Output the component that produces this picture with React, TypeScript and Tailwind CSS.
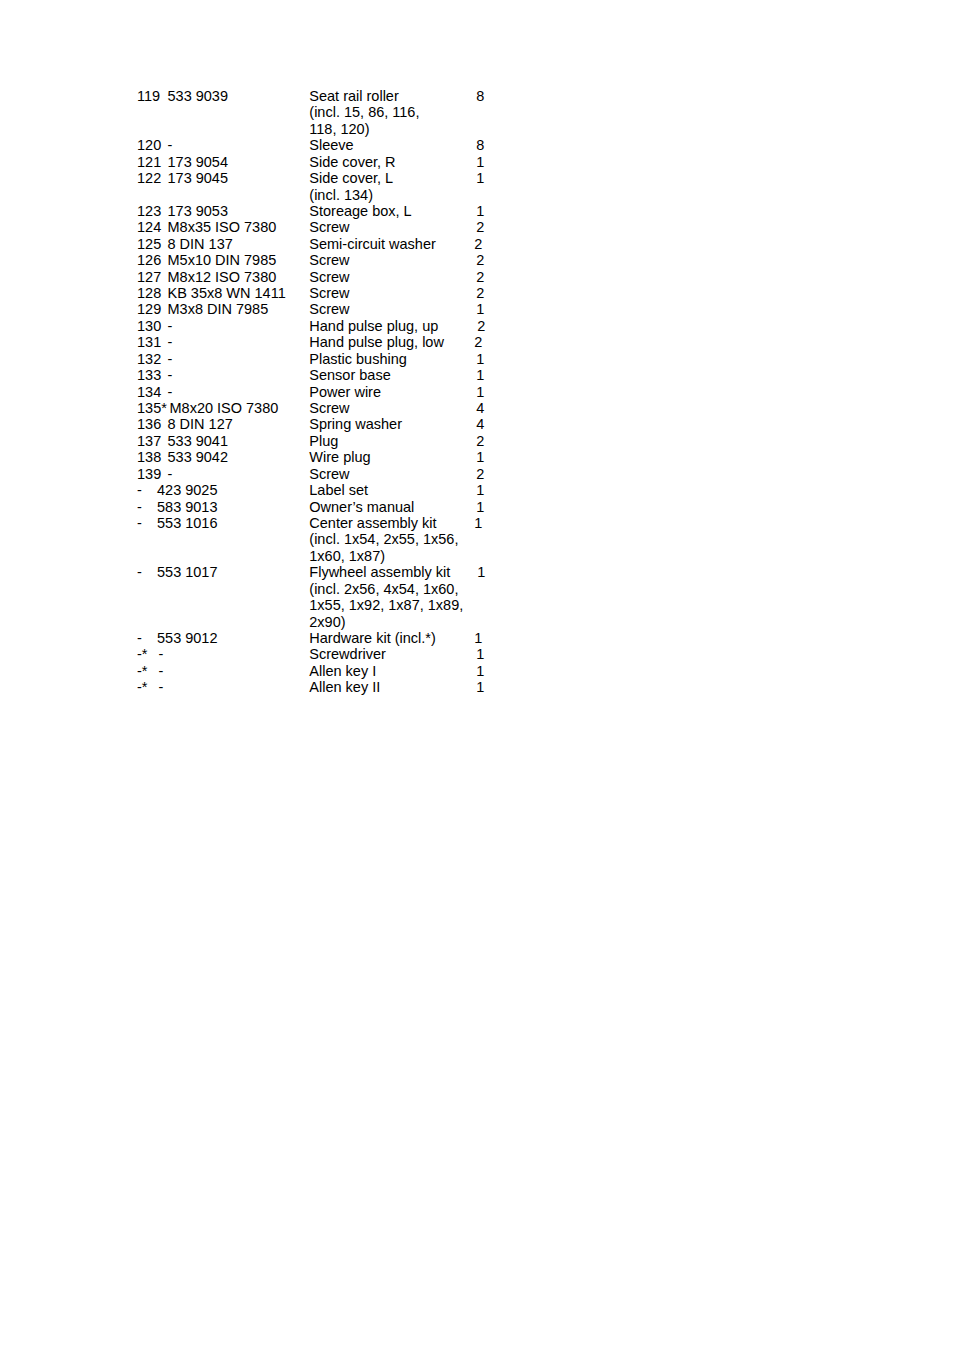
type Row = {
  n: string
  p: string
  d: string[]
  q: string
  nw?: string
  qp?: string
}

// parts list rows; nw = width of the item-number slot, qp = nudge of the quantity
const rows: Row[] = [
  { n: '119', p: '533 9039', d: ['Seat rail roller', '(incl. 15, 86, 116,', '118, 120)'], q: '8' },
  { n: '120', p: '-', d: ['Sleeve'], q: '8' },
  { n: '121', p: '173 9054', d: ['Side cover, R'], q: '1' },
  { n: '122', p: '173 9045', d: ['Side cover, L', '(incl. 134)'], q: '1' },
  { n: '123', p: '173 9053', d: ['Storeage box, L'], q: '1' },
  { n: '124', p: 'M8x35 ISO 7380', d: ['Screw'], q: '2' },
  { n: '125', p: '8 DIN 137', d: ['Semi-circuit washer'], q: '2', qp: 'pl-0' },
  { n: '126', p: 'M5x10 DIN 7985', d: ['Screw'], q: '2' },
  { n: '127', p: 'M8x12 ISO 7380', d: ['Screw'], q: '2' },
  { n: '128', p: 'KB 35x8 WN 1411', d: ['Screw'], q: '2' },
  { n: '129', p: 'M3x8 DIN 7985', d: ['Screw'], q: '1' },
  { n: '130', p: '-', d: ['Hand pulse plug, up'], q: '2', qp: 'pl-[3px]' },
  { n: '131', p: '-', d: ['Hand pulse plug, low'], q: '2', qp: 'pl-0' },
  { n: '132', p: '-', d: ['Plastic bushing'], q: '1' },
  { n: '133', p: '-', d: ['Sensor base'], q: '1' },
  { n: '134', p: '-', d: ['Power wire'], q: '1' },
  { n: '135*', p: 'M8x20 ISO 7380', d: ['Screw'], q: '4', nw: 'w-[32.5px]' },
  { n: '136', p: '8 DIN 127', d: ['Spring washer'], q: '4' },
  { n: '137', p: '533 9041', d: ['Plug'], q: '2' },
  { n: '138', p: '533 9042', d: ['Wire plug'], q: '1' },
  { n: '139', p: '-', d: ['Screw'], q: '2' },
  { n: '-', p: '423 9025', d: ['Label set'], q: '1', nw: 'w-[20px]' },
  { n: '-', p: '583 9013', d: ['Owner\u2019s manual'], q: '1', nw: 'w-[20px]' },
  {
    n: '-',
    p: '553 1016',
    d: ['Center assembly kit', '(incl. 1x54, 2x55, 1x56,', '1x60, 1x87)'],
    q: '1',
    nw: 'w-[20px]',
    qp: 'pl-0',
  },
  {
    n: '-',
    p: '553 1017',
    d: ['Flywheel assembly kit', '(incl. 2x56, 4x54, 1x60,', '1x55, 1x92, 1x87, 1x89,', '2x90)'],
    q: '1',
    nw: 'w-[20px]',
    qp: 'pl-[3px]',
  },
  { n: '-', p: '553 9012', d: ['Hardware kit (incl.*)'], q: '1', nw: 'w-[20px]', qp: 'pl-0' },
  { n: '-*', p: '-', d: ['Screwdriver'], q: '1', nw: 'w-[21.5px]' },
  { n: '-*', p: '-', d: ['Allen key I'], q: '1', nw: 'w-[21.5px]' },
  { n: '-*', p: '-', d: ['Allen key II'], q: '1', nw: 'w-[21.5px]' },
]

export default function App() {
  return (
    <div className="min-h-[1350px] w-full bg-white text-black">
      <div className="pl-[137px] pt-[88px] font-['Liberation_Sans',Arial,sans-serif] text-[14.5px] leading-[16.42px]">
        {rows.map((r, i) => (
          <div key={i} className="flex items-start">
            <div className="w-[172.3px] shrink-0 whitespace-nowrap">
              <span className={`inline-block ${r.nw ?? 'w-[30.5px]'}`}>{r.n}</span>
              <span>{r.p}</span>
            </div>
            <div className="w-[165px] shrink-0 whitespace-nowrap">
              {r.d.map((line, j) => (
                <div key={j}>{line}</div>
              ))}
            </div>
            <div className={r.qp ?? 'pl-[2px]'}>{r.q}</div>
          </div>
        ))}
      </div>
    </div>
  )
}
